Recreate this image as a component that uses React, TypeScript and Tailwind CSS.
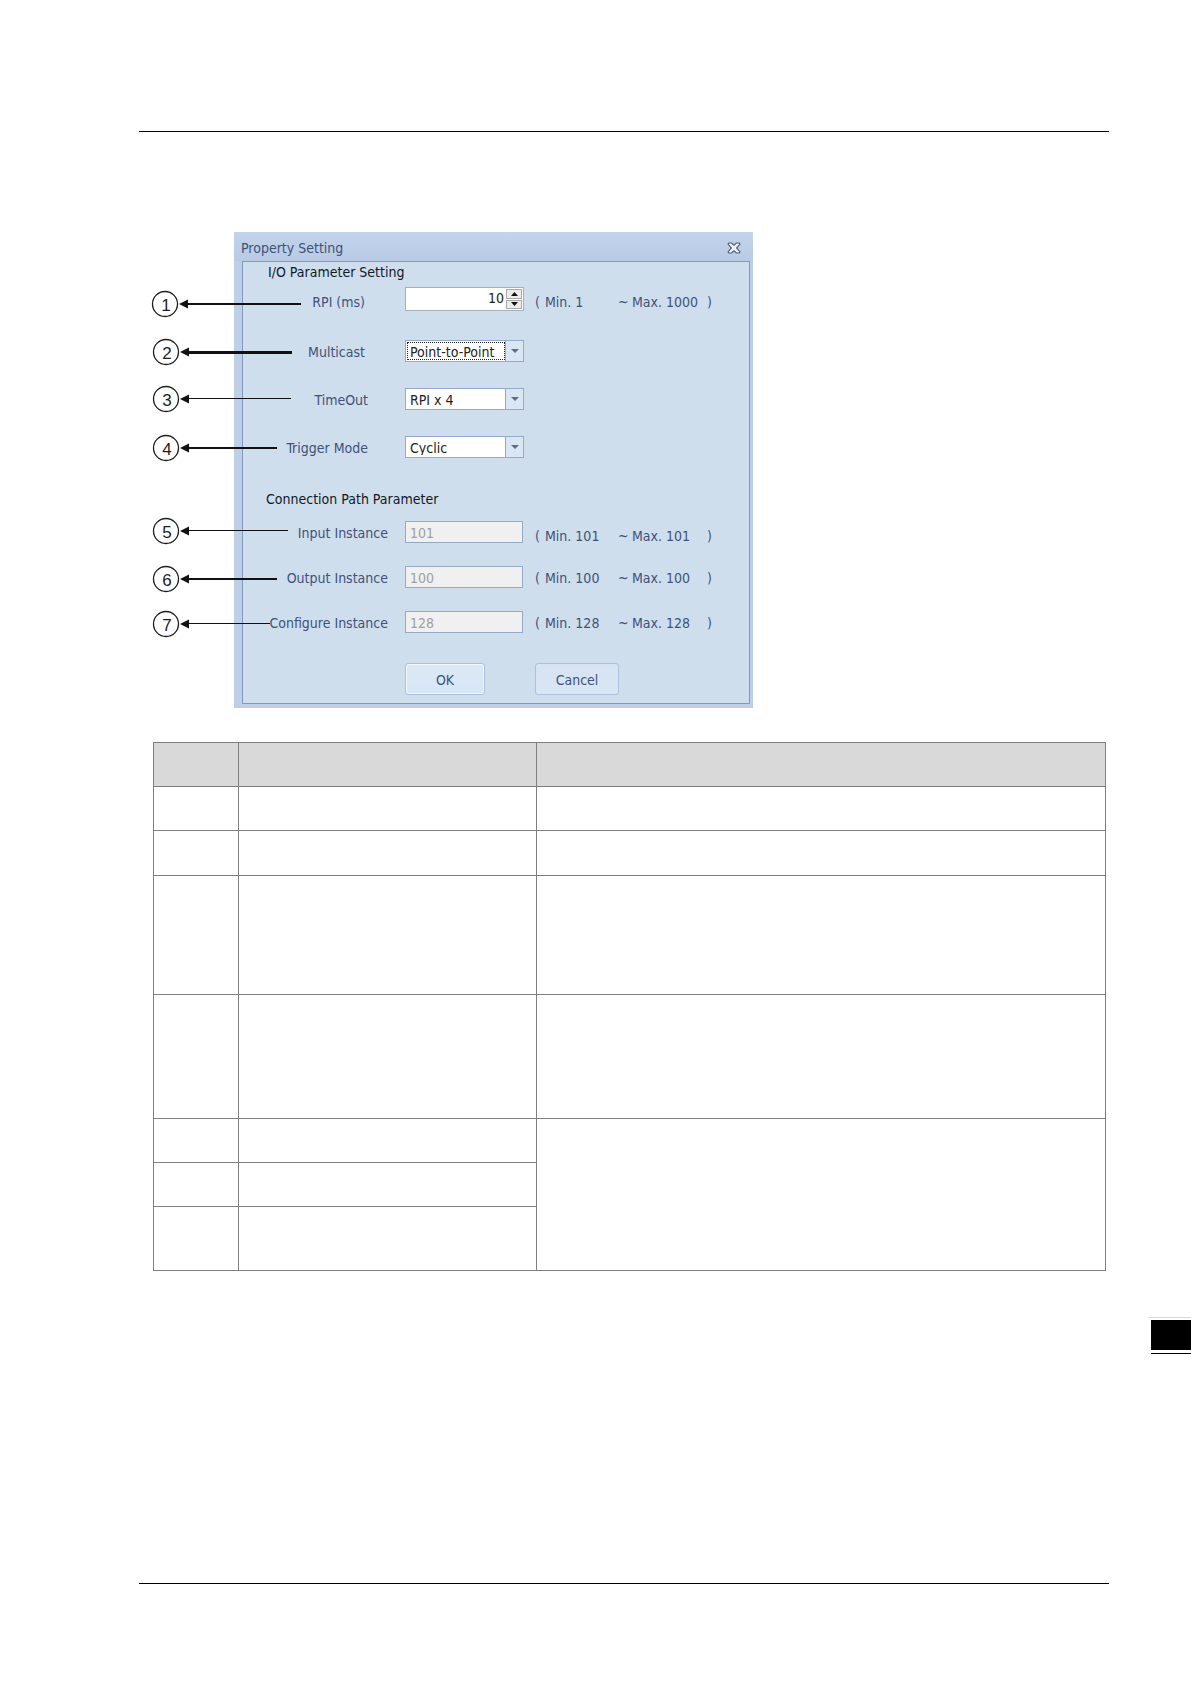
import { useState } from 'react'

interface Callout { n: number; cx: number; cy: number; end: number; weight: number }
interface PathParam { id: string; label: string; value: string; align: string }

const callouts: Callout[] = [
  { n: 1, cx: 26, cy: 72, end: 162, weight: 2 },
  { n: 2, cx: 27, cy: 120, end: 153, weight: 3 },
  { n: 3, cx: 27, cy: 167, end: 152, weight: 1 },
  { n: 4, cx: 27, cy: 216, end: 138, weight: 2 },
  { n: 5, cx: 27, cy: 299, end: 149, weight: 1 },
  { n: 6, cx: 27, cy: 347, end: 138, weight: 2 },
  { n: 7, cx: 27, cy: 392, end: 131, weight: 1 },
]

const modes = [
  { id: 'multicast', label: 'Multicast', pad: 'pr-10', gap: 'mt-[29px]', options: ['Point-to-Point', 'Multicast'], focused: true },
  { id: 'timeout', label: 'TimeOut', pad: 'pr-[37px]', gap: 'mt-[26px]', options: ['RPI x 4', 'RPI x 8', 'RPI x 16'], focused: false },
  { id: 'trigger', label: 'Trigger Mode', pad: 'pr-[37px]', gap: 'mt-[26px]', options: ['Cyclic', 'Change of State'], focused: false },
]

const pathParams: PathParam[] = [
  { id: 'input-instance', label: 'Input Instance', value: '101', align: 'pt-2' },
  { id: 'output-instance', label: 'Output Instance', value: '100', align: 'pt-0.5' },
  { id: 'configure-instance', label: 'Configure Instance', value: '128', align: 'pt-0.5' },
]

const rowHeights = ['h-11', 'h-[45px]', 'h-[119px]', 'h-[124px]']

function Callouts() {
  return (
    <svg className="absolute left-0 top-0 pointer-events-none" width="170" height="420" aria-label="Callouts">
      {callouts.map(c => (
        <g key={c.n}>
          <circle cx={c.cx} cy={c.cy} r="12.5" fill="#fff" stroke="#1d1d1f" strokeWidth="1.3" />
          <text x={c.cx + 1} y={c.cy + 7} textAnchor="middle" fontSize="17" fill="#1d1d1f" fontFamily="Liberation Sans, sans-serif">{c.n}</text>
          <path d={`M${c.cx + 14} ${c.cy}l9-4.5v9z`} fill="#111" />
          <rect x={c.cx + 22} y={c.cy - Math.floor(c.weight / 2) - (c.weight === 1 ? 1 : 0)} width={c.end - c.cx - 22} height={c.weight} fill="#111" />
        </g>
      ))}
    </svg>
  )
}

function Range({ min, max, className = '' }: { min: string; max: string; className?: string }) {
  return (
    <span className={`grid grid-cols-[10px_73px_14px_75px_auto] whitespace-pre ${className}`}>
      <span>(</span>
      <span>Min. {min}</span>
      <span>~</span>
      <span>Max. {max}</span>
      <span>)</span>
    </span>
  )
}

function PropertyDialog() {
  const [rpi, setRpi] = useState(10)

  return (
    <section className="w-[519px] ml-[95px] pl-2 pr-[3px] pb-1 bg-[#bfcfe7] text-sm leading-5 text-[#40527a]" aria-label="Property Setting">
      <header className="flex items-center justify-between h-[29px] -ml-2 -mr-[3px] pl-[7px] pr-3 pt-0.5 bg-linear-to-b from-[#c2d4ec] to-[#b9cae4]">
        <h1>Property Setting</h1>
        <button type="button" aria-label="Close">
          <svg width="14" height="12" viewBox="0 0 14 12" fill="none">
            <path d="M2 1h2.500L7 3.300 9.500 1H12l1 1.200L9.600 6 13 9.800 12 11H9.500L7 8.700 4.500 11H2L1 9.800 4.400 6 1 2.200z" fill="#eef3fa" stroke="#596678" strokeWidth="1.200" strokeLinejoin="round" />
          </svg>
        </button>
      </header>

      <form className="border border-[#8299bf] bg-[#cfdeed] pb-2" onSubmit={e => e.preventDefault()}>
        <h2 className="pl-[25px] text-[#111827]">I/O Parameter Setting</h2>

        <div className="flex items-center h-6 mt-[5px]">
          <label htmlFor="rpi" className="w-[162px] pr-10 pt-[5px] text-right">RPI (ms)</label>
          <div className="flex w-[119px] h-6 p-px bg-white border border-[#a5b0bf]">
            <input id="rpi" type="text" inputMode="numeric" value={rpi} onChange={e => setRpi(Number(e.target.value) || 0)}
              className="flex-1 min-w-0 pb-0.5 pr-0.5 text-right text-[#222] outline-none" />
            <span className="flex flex-col w-4 gap-px">
              <button type="button" aria-label="Increase" onClick={() => setRpi(v => Math.min(1000, v + 1))}
                className="flex flex-1 items-center justify-center bg-[#ececec] border border-[#a9a9a9]">
                <svg width="7" height="4"><path d="M3.500 0L7 4H0z" fill="#111" /></svg>
              </button>
              <button type="button" aria-label="Decrease" onClick={() => setRpi(v => Math.max(1, v - 1))}
                className="flex flex-1 items-center justify-center bg-[#ececec] border border-[#a9a9a9]">
                <svg width="7" height="4"><path d="M0 0h7L3.500 4z" fill="#111" /></svg>
              </button>
            </span>
          </div>
          <Range min="1" max="1000" className="ml-[11px] pt-[5px]" />
        </div>

        {modes.map(m => (
          <div key={m.id} className={`flex items-center h-[22px] ${m.gap}`}>
            <label htmlFor={m.id} className={`w-[162px] pt-px text-right ${m.pad}`}>{m.label}</label>
            <div className="relative w-[119px] h-[22px] p-px bg-white border border-[#94a9cb]">
              <select id={m.id} className={`appearance-none block w-[98px] h-[18px] pl-[2px] pt-px text-[#222] leading-4 outline-none border border-dotted ${m.focused ? 'border-[#222]' : 'border-transparent'}`}>
                {m.options.map(o => <option key={o}>{o}</option>)}
              </select>
              <span className="absolute right-0 inset-y-0 flex items-center justify-center w-[18px] bg-[#d9e7f5] border-l border-[#94a9cb] pointer-events-none">
                <svg width="8" height="4"><path d="M0 0h8L4 4z" fill="#5c6f86" /></svg>
              </span>
            </div>
          </div>
        ))}

        <h2 className="pl-[23px] mt-[31px] text-[#111827]">Connection Path Parameter</h2>

        <div className="flex flex-col gap-[23px] mt-3">
          {pathParams.map(p => (
            <div key={p.id} className="flex items-center h-[22px]">
              <label htmlFor={p.id} className="w-[162px] pr-[17px] pt-px text-right whitespace-nowrap">{p.label}</label>
              <input id={p.id} type="text" defaultValue={p.value} disabled
                className="w-[118px] h-[22px] pl-1 pt-0.5 bg-[#f0f0f0] border border-[#94a9c6] text-[#a0a0a0]" />
              <Range min={p.value} max={p.value} className={`ml-3 ${p.align}`} />
            </div>
          ))}
        </div>

        <div className="flex gap-[50px] pl-[162px] mt-[30px]">
          <button type="submit" className="w-20 h-8 pt-px rounded-[3px] border border-[#adc0dc] bg-linear-to-b from-[#dce9f6] to-[#d7e7f7] shadow-[inset_0_0_0_1px_#f0f7fd]">OK</button>
          <button type="button" className="w-[84px] h-8 pt-px rounded-[3px] border border-[#adc0dc] bg-linear-to-b from-[#d5e3f2] to-[#d9e7f5]">Cancel</button>
        </div>
      </form>
    </section>
  )
}

export default function App() {
  return (
    <div className="bg-white pt-[131px] pb-[100px] font-['DejaVu_Sans_Condensed','DejaVu_Sans',sans-serif]">
      <main className="pl-[139px] pr-[82px]">
        <hr className="border-t border-black" />

        <figure className="relative mt-[100px]">
          <PropertyDialog />
          <Callouts />
        </figure>

        <div className="mt-[34px] pl-[14px] pr-[3px]">
          <table className="w-full table-fixed border-collapse [&_td]:border [&_td]:border-[#7f7f7f] [&_th]:border [&_th]:border-[#7f7f7f]">
            <colgroup>
              <col className="w-[85px]" />
              <col className="w-[298px]" />
              <col />
            </colgroup>
            <thead>
              <tr className="h-11 bg-[#d9d9d9]"><th /><th /><th /></tr>
            </thead>
            <tbody>
              {rowHeights.map(h => (
                <tr key={h} className={h}><td /><td /><td /></tr>
              ))}
              <tr className="h-11"><td /><td /><td rowSpan={3} /></tr>
              <tr className="h-11"><td /><td /></tr>
              <tr className="h-16"><td /><td /></tr>
            </tbody>
          </table>
        </div>
      </main>

      {/* Chapter thumb tab */}
      <div className="mt-[46px] ml-auto w-[43px] border-t border-[#d9d9d9]">
        <div className="mt-[2px] ml-[3px] h-[30px] bg-black" />
        <div className="mt-[3px] ml-[3px] h-px bg-black" />
      </div>

      <hr className="mt-[229px] ml-[139px] mr-[82px] border-t border-black" />
    </div>
  )
}
